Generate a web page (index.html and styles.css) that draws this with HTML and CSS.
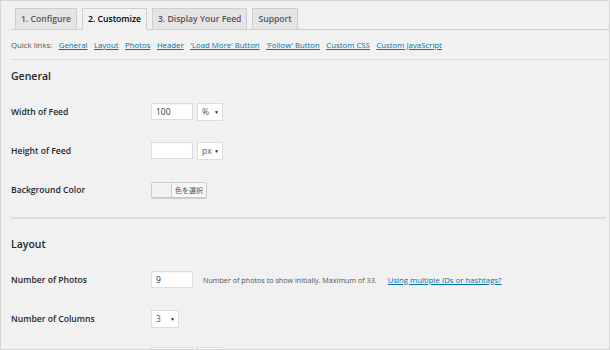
FILE: index.html
```html
<!DOCTYPE html>
<html>
<head>
<meta charset="utf-8">
<link rel="stylesheet" href="styles.css">
</head>
<body>
<div class="page">
  <div class="tabs">
    <span class="tab">1. Configure</span>
    <span class="tab active">2. Customize</span>
    <span class="tab">3. Display Your Feed</span>
    <span class="tab">Support</span>
  </div>
  <div class="quick">
    <span class="ql-label">Quick links:</span>
    <a href="#">General</a>
    <a href="#">Layout</a>
    <a href="#">Photos</a>
    <a href="#">Header</a>
    <a href="#">'Load More' Button</a>
    <a href="#">'Follow' Button</a>
    <a href="#">Custom CSS</a>
    <a href="#">Custom JavaScript</a>
  </div>
  <h3 class="heading">General</h3>
  <div class="row">
    <span class="label">Width of Feed</span>
    <input class="text" type="text" value="100">
    <span class="select w-unit">%<i class="arrow">▼</i></span>
  </div>
  <div class="row">
    <span class="label">Height of Feed</span>
    <input class="text" type="text" value="">
    <span class="select w-unit">px<i class="arrow">▼</i></span>
  </div>
  <div class="row">
    <span class="label">Background Color</span>
    <span class="color-btn"><span class="swatch"></span><span class="color-text">色を選択</span></span>
  </div>
  <hr class="sep">
  <h3 class="heading">Layout</h3>
  <div class="row">
    <span class="label">Number of Photos</span>
    <input class="text" type="text" value="9">
    <span class="help">Number of photos to show initially. Maximum of 33.</span>
    <a class="help-link" href="#">Using multiple IDs or hashtags?</a>
  </div>
  <div class="row">
    <span class="label">Number of Columns</span>
    <span class="select w-col">3<i class="arrow">▼</i></span>
  </div>
  <div class="row last">
    <span class="label"></span>
    <input class="text" type="text" value="">
    <span class="select w-unit"></span>
  </div>
</div>
</body>
</html>
```

FILE: styles.css
```css
html, body {
  margin: 0;
  padding: 0;
  background: #f1f1f1;
}
.page {
  box-sizing: border-box;
  width: 610px;
  height: 350px;
  border: 1px solid #d6d6d6;
  overflow: hidden;
  padding-left: 10px;
  font-family: "Open Sans", "Noto Sans", sans-serif;
  color: #23282d;
}
.tabs {
  display: flex;
  align-items: flex-end;
  height: 28px;
  padding-left: 4px;
  border-bottom: 1px solid #cfcfcf;
  gap: 5px;
}
.tab {
  box-sizing: border-box;
  height: 22px;
  margin-bottom: -1px;
  padding: 0 5px;
  display: flex;
  align-items: center;
  font-size: 8.6px;
  font-weight: 600;
  color: #555;
  background: #e5e5e5;
  border: 1px solid #cfcfcf;
}
.tab.active {
  background: #f1f1f1;
  color: #000;
  border-bottom-color: #f1f1f1;
}
.quick {
  height: 29px;
  display: flex;
  align-items: center;
  gap: 6.5px;
  font-size: 7.8px;
  color: #555;
  border-bottom: 1px solid #dcdcdc;
}
.quick a, .help-link {
  color: #0073aa;
  text-decoration: underline;
}
.heading {
  margin: 0;
  height: 32px;
  display: flex;
  align-items: center;
  font-size: 10.5px;
  font-weight: 600;
  color: #23282d;
}
.row {
  height: 39px;
  display: flex;
  align-items: center;
}
.row.last {
  margin-top: -2px;
}
.label {
  width: 140px;
  flex: none;
  font-size: 8.6px;
  font-weight: 600;
  color: #23282d;
}
.text {
  box-sizing: border-box;
  width: 42px;
  height: 17px;
  margin: 0;
  padding: 0 4px;
  border: 1px solid #dcdcdc;
  background: #fff;
  font-family: "Open Sans", "Noto Sans", sans-serif;
  font-size: 8.5px;
  color: #333;
  box-shadow: inset 0 1px 1px rgba(0,0,0,0.04);
  outline: none;
}
.select {
  box-sizing: border-box;
  height: 18px;
  margin-left: 4px;
  padding-left: 4px;
  display: flex;
  align-items: center;
  border: 1px solid #dcdcdc;
  background: #fff;
  font-size: 8.5px;
  color: #555;
  position: relative;
}
.w-unit { width: 26px; }
.w-col { width: 28px; margin-left: 0; }
.arrow {
  position: absolute;
  right: 3px;
  top: 5px;
  font-style: normal;
  font-size: 5px;
  color: #222;
}
.color-btn {
  box-sizing: border-box;
  display: flex;
  height: 16px;
  border: 1px solid #ccc;
  border-radius: 2px;
  box-shadow: 0 1px 0 #ccc;
  background: #f7f7f7;
  overflow: hidden;
}
.swatch {
  width: 19px;
  border-right: 1px solid #ccc;
  background: #f1f1f1;
}
.color-text {
  padding: 0 3px 0 3px;
  display: flex;
  align-items: center;
  font-family: "Noto Sans CJK JP", sans-serif;
  font-size: 7px;
  color: #555;
}
.sep {
  margin: 8px 3px 9px 0;
  border: 0;
  height: 2px;
  background: #dedede;
}
.help {
  margin-left: 10px;
  font-size: 7.2px;
  color: #555;
}
.help-link {
  margin-left: 11px;
  font-size: 7.8px;
}
```
